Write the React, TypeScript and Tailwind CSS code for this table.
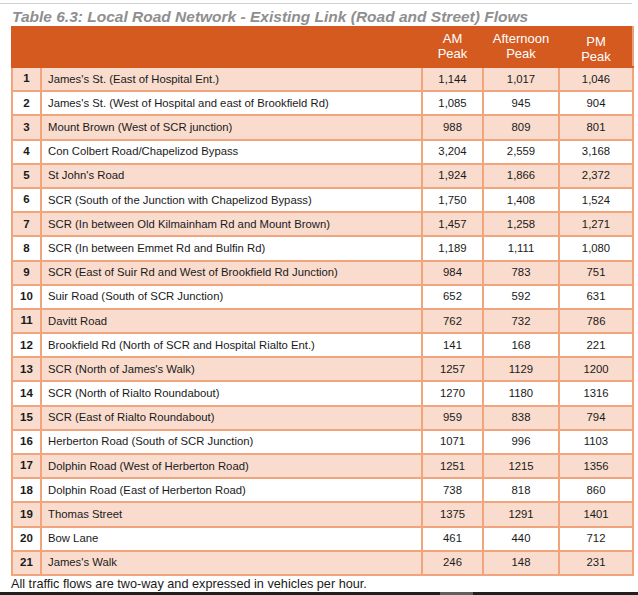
import React from "react";

const rows: [string, string, string, string][] = [
  ["James's St. (East of Hospital Ent.)", "1,144", "1,017", "1,046"],
  ["James's St. (West of Hospital and east of Brookfield Rd)", "1,085", "945", "904"],
  ["Mount Brown (West of SCR junction)", "988", "809", "801"],
  ["Con Colbert Road/Chapelizod Bypass", "3,204", "2,559", "3,168"],
  ["St John's Road", "1,924", "1,866", "2,372"],
  ["SCR (South of the Junction with Chapelizod Bypass)", "1,750", "1,408", "1,524"],
  ["SCR (In between Old Kilmainham Rd and Mount Brown)", "1,457", "1,258", "1,271"],
  ["SCR (In between Emmet Rd and Bulfin Rd)", "1,189", "1,111", "1,080"],
  ["SCR (East of Suir Rd and West of Brookfield Rd Junction)", "984", "783", "751"],
  ["Suir Road (South of SCR Junction)", "652", "592", "631"],
  ["Davitt Road", "762", "732", "786"],
  ["Brookfield Rd (North of SCR and Hospital Rialto Ent.)", "141", "168", "221"],
  ["SCR (North of James's Walk)", "1257", "1129", "1200"],
  ["SCR (North of Rialto Roundabout)", "1270", "1180", "1316"],
  ["SCR (East of Rialto Roundabout)", "959", "838", "794"],
  ["Herberton Road (South of SCR Junction)", "1071", "996", "1103"],
  ["Dolphin Road (West of Herberton Road)", "1251", "1215", "1356"],
  ["Dolphin Road (East of Herberton Road)", "738", "818", "860"],
  ["Thomas Street", "1375", "1291", "1401"],
  ["Bow Lane", "461", "440", "712"],
  ["James's Walk", "246", "148", "231"],
];

export default function App() {
  return (
    <div className="w-[638px] h-[595px] bg-white overflow-hidden flex flex-col" style={{ fontFamily: '"Liberation Sans", Arial, sans-serif' }}>
      <div className="mt-[3px] h-[1px] w-[632px] bg-[#d0d0d0]" />
      <div className="pl-[12px] pt-[4px] h-[22px] text-[15.5px] leading-[18px] font-bold italic text-[#8f8f8f]">
        Table 6.3: Local Road Network - Existing Link (Road and Street) Flows
      </div>
      <div className="pl-[11px]">
        <table className="border-collapse w-[621px] table-fixed text-[11.3px] text-[#1a1a1a]">
          <colgroup>
            <col className="w-[29px]" />
            <col className="w-[381px]" />
            <col className="w-[61px]" />
            <col className="w-[76px]" />
            <col className="w-[74px]" />
          </colgroup>
          <thead>
            <tr className="h-[40px] bg-[#d45a20] text-white text-[13px] leading-[15px]">
              <th className="border-2 border-[#d45a20]" />
              <th className="border-2 border-[#d45a20]" />
              <th className="border-2 border-[#d45a20] font-normal text-center pb-[3px]">AM<br />Peak</th>
              <th className="border-2 border-[#d45a20] font-normal text-center pb-[3px]">Afternoon<br />Peak</th>
              <th className="border-2 border-[#d45a20] border-r-[#e8a080] font-normal text-center pt-[3px]">PM<br />Peak</th>
            </tr>
          </thead>
          <tbody>
            {rows.map((r, i) => (
              <tr key={i} className={`h-[24.2px] ${i % 2 === 0 ? "bg-[#f9dccd]" : "bg-white"}`}>
                <td className="border-2 border-[#f2a57d] text-center font-bold text-[11.5px]">{i + 1}</td>
                <td className="border-2 border-[#f2a57d] pl-[6px] whitespace-nowrap">{r[0]}</td>
                <td className="border-2 border-[#f2a57d] text-center">{r[1]}</td>
                <td className="border-2 border-[#f2a57d] text-center">{r[2]}</td>
                <td className="border-2 border-[#f2a57d] text-center">{r[3]}</td>
              </tr>
            ))}
          </tbody>
        </table>
      </div>
      <div className="pl-[11px] text-[12.7px] leading-[15px] text-[#1a1a1a] mt-[1px]">
        All traffic flows are two-way and expressed in vehicles per hour.
      </div>
      <div className="mt-auto h-[3px] w-full bg-[#202020] flex">
        <div className="ml-[440px] w-[33px] bg-[#606060]" />
      </div>
    </div>
  );
}
